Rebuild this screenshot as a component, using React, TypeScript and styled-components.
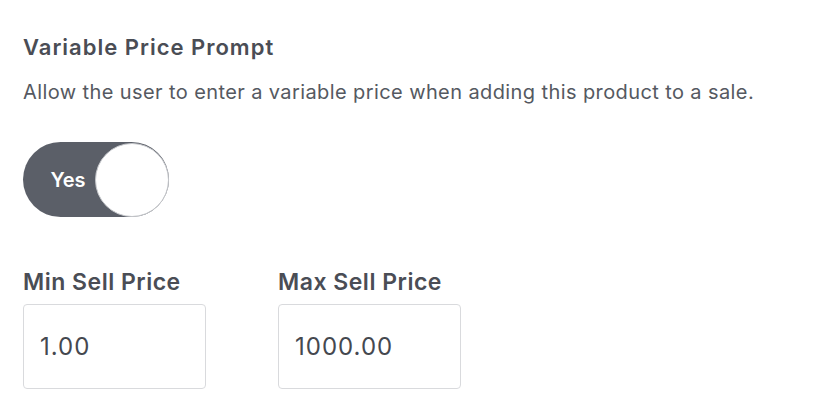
import styled, { createGlobalStyle } from 'styled-components';

const GlobalStyle = createGlobalStyle`
  body {
    margin: 0;
    background: #ffffff;
    font-family: Inter, "Liberation Sans", sans-serif;
  }
`;

const Page = styled.div`
  padding: 33px 23px 0;
  display: flex;
  flex-direction: column;
`;

const Title = styled.h2`
  margin: 0;
  font-size: 22px;
  line-height: 28px;
  font-weight: 600;
  letter-spacing: 1px;
  color: #4a4d55;
`;

const Description = styled.p`
  margin: 18px 0 0;
  font-size: 20px;
  line-height: 26px;
  letter-spacing: 0.4px;
  color: #555961;
`;

const Toggle = styled.button<{ on: boolean }>`
  margin-top: 37px;
  width: 146px;
  height: 75px;
  padding: 0;
  border: none;
  border-radius: 38px;
  background: ${(p) => (p.on ? '#5b5f68' : '#d6d8dc')};
  display: flex;
  align-items: center;
  cursor: pointer;
`;

const ToggleLabel = styled.span`
  flex: 1;
  padding-left: 18px;
  text-align: center;
  font-family: Inter, "Liberation Sans", sans-serif;
  font-size: 20px;
  font-weight: 600;
  color: #ffffff;
`;

const Knob = styled.span`
  flex-shrink: 0;
  box-sizing: border-box;
  width: 74px;
  height: 74px;
  border-radius: 50%;
  background: #ffffff;
  border: 1px solid #c4c6ca;
`;

const Fields = styled.div`
  margin-top: 50px;
  display: flex;
  gap: 72px;
`;

const Field = styled.label`
  display: flex;
  flex-direction: column;
  gap: 7px;
`;

const FieldLabel = styled.span`
  font-size: 23px;
  line-height: 30px;
  font-weight: 600;
  letter-spacing: 0.5px;
  color: #4a4d55;
`;

const Input = styled.input`
  box-sizing: border-box;
  width: 183px;
  height: 85px;
  padding: 0 16px;
  border: 1px solid #d9dadd;
  border-radius: 4px;
  font-family: Inter, "Liberation Sans", sans-serif;
  font-size: 24px;
  letter-spacing: 1px;
  color: #45484f;
  outline: none;
`;

export default function App() {
  return (
    <Page>
      <GlobalStyle />
      <Title>Variable Price Prompt</Title>
      <Description>
        Allow the user to enter a variable price when adding this product to a sale.
      </Description>
      <Toggle on={true} type="button">
        <ToggleLabel>Yes</ToggleLabel>
        <Knob />
      </Toggle>
      <Fields>
        <Field>
          <FieldLabel>Min Sell Price</FieldLabel>
          <Input defaultValue="1.00" />
        </Field>
        <Field>
          <FieldLabel>Max Sell Price</FieldLabel>
          <Input defaultValue="1000.00" />
        </Field>
      </Fields>
    </Page>
  );
}
